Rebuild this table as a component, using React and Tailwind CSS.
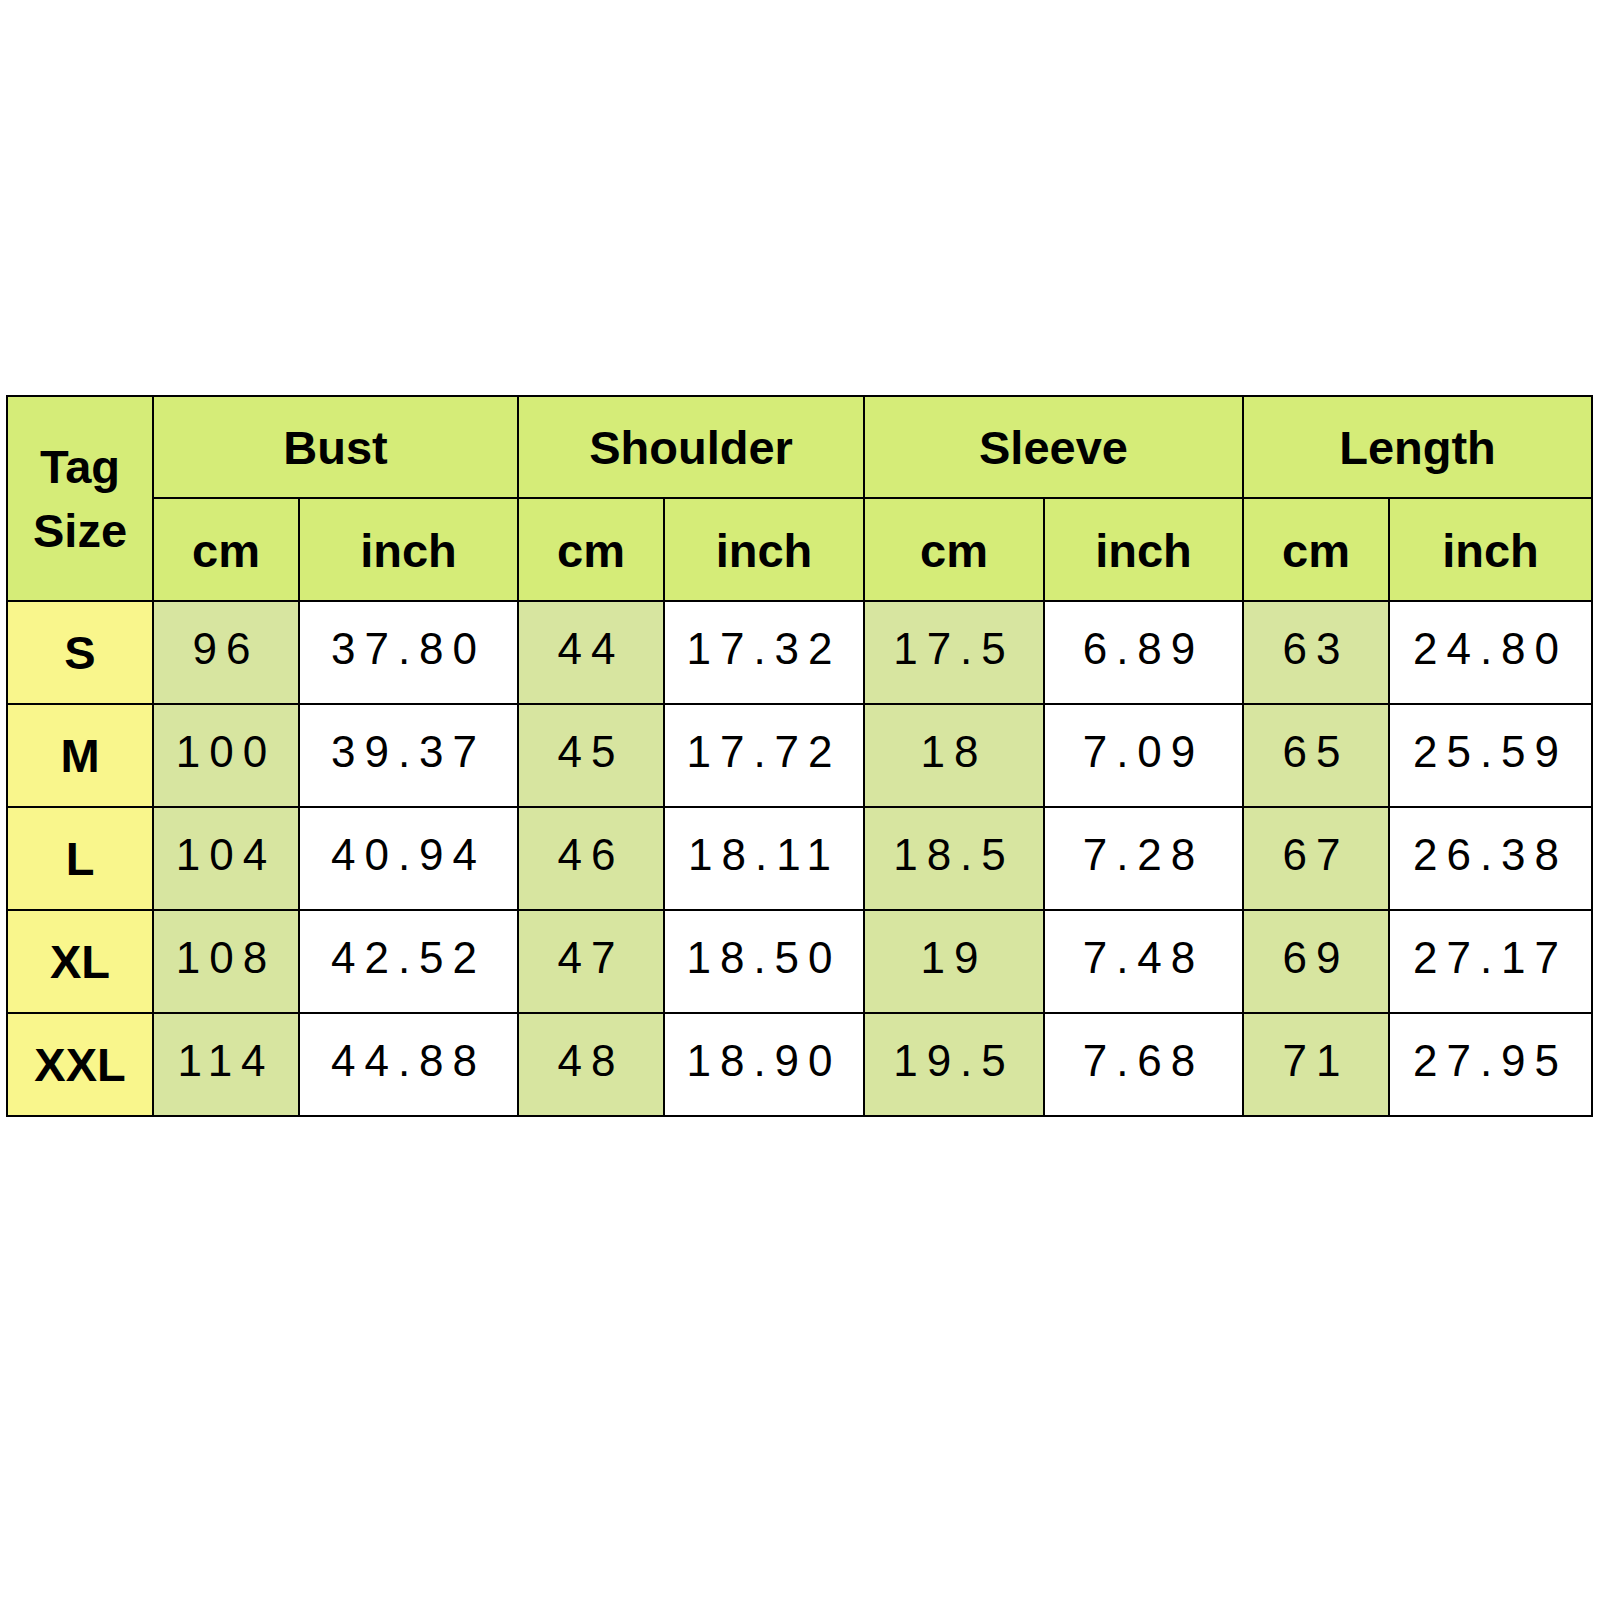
import React from "react";

const HDR = "bg-[#d5ec78]";
const TAG = "bg-[#f9f68c]";
const CMC = "bg-[#d7e5a0]";

const rows = [
  ["S", "96", "37.80", "44", "17.32", "17.5", "6.89", "63", "24.80"],
  ["M", "100", "39.37", "45", "17.72", "18", "7.09", "65", "25.59"],
  ["L", "104", "40.94", "46", "18.11", "18.5", "7.28", "67", "26.38"],
  ["XL", "108", "42.52", "47", "18.50", "19", "7.48", "69", "27.17"],
  ["XXL", "114", "44.88", "48", "18.90", "19.5", "7.68", "71", "27.95"],
];

const hfont = { fontFamily: '"Liberation Sans", Arial, sans-serif' };

function H({ children, className = "" }) {
  return (
    <div
      className={`${HDR} flex items-center justify-center text-[47px] font-bold text-black ${className}`}
      style={hfont}
    >
      {children}
    </div>
  );
}

export default function App() {
  return (
    <div className="w-[1600px] h-[1600px] bg-white pt-[395px] pl-[6px]">
      <div
        className="grid w-fit bg-black p-[2px] gap-[2px] grid-cols-[144px_144px_217px_144px_198px_178px_197px_144px_201px] grid-rows-[100px_101px_101px_101px_101px_101px_101px]"
        style={hfont}
      >
        <H className="row-span-2 flex-col">
          <span className="block leading-[64px]">Tag</span>
          <span className="block leading-[64px]">Size</span>
        </H>
        <H className="col-span-2 leading-none">Bust</H>
        <H className="col-span-2 leading-none">Shoulder</H>
        <H className="col-span-2 leading-none">Sleeve</H>
        <H className="col-span-2 leading-none">Length</H>
        {["cm", "inch", "cm", "inch", "cm", "inch", "cm", "inch"].map((t, i) => (
          <H key={i} className="pt-[2px] leading-none">{t}</H>
        ))}
        {rows.map((r, ri) => (
          <React.Fragment key={ri}>
            <div
              className={`${TAG} flex items-center justify-center text-[47px] font-bold text-black leading-none`}
            >
              {r[0]}
            </div>
            {r.slice(1).map((v, ci) => (
              <div
                key={ci}
                className={`${ci % 2 === 0 ? CMC : "bg-white"} flex items-center justify-center pb-[8px] text-[44px] font-normal text-black leading-none tracking-[9px]`}
              >
                {v}
              </div>
            ))}
          </React.Fragment>
        ))}
      </div>
    </div>
  );
}
